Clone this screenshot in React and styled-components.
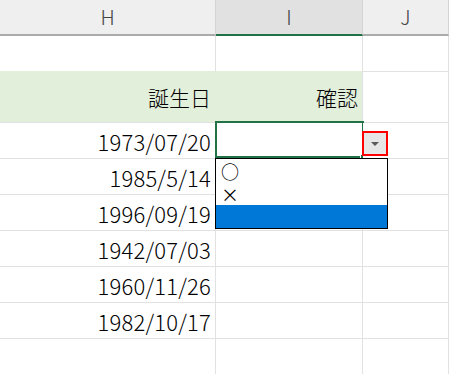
import { Fragment } from "react";
import styled, { createGlobalStyle } from "styled-components";

const GlobalStyle = createGlobalStyle`
  html, body {
    margin: 0;
    padding: 0;
    background: #fff;
    overflow: hidden;
  }
  * {
    box-sizing: border-box;
  }
`;

const Sheet = styled.div`
  display: grid;
  grid-template-columns: 216px 147px 1fr;
  width: 449px;
  font-family: "Noto Sans CJK JP", "Noto Sans", sans-serif;
  color: #000;
`;

const ColHead = styled.div`
  height: 36px;
  display: flex;
  align-items: center;
  justify-content: center;
  padding-bottom: 1px;
  background: ${(p) => (p.$active ? "#e1e1e1" : "#efefef")};
  border-right: 1px solid #d4d4d4;
  border-bottom: 2px solid ${(p) => (p.$active ? "#217346" : "#ababab")};
  font-size: 20px;
  font-weight: 300;
  color: #444;
`;

const Cell = styled.div`
  position: relative;
  height: ${(p) => p.$h || 36}px;
  display: flex;
  align-items: center;
  justify-content: flex-end;
  padding-right: 4px;
  background: ${(p) => p.$fill || "#fff"};
  border-right: 1px solid ${(p) => p.$right || "#e1e1e1"};
  border-bottom: 1px solid ${(p) => p.$bottom || "#e1e1e1"};
  font-size: 21px;
  font-weight: 300;
  line-height: 1;
  white-space: nowrap;
`;

const DateText = styled.span`
  font-size: 22px;
  letter-spacing: 0.2px;
`;

const Selection = styled.div`
  position: absolute;
  left: -1px;
  top: -2px;
  width: 149px;
  height: 37px;
  border: 2px solid #217346;
  pointer-events: none;
`;

const FillHandle = styled.div`
  position: absolute;
  right: -4px;
  bottom: -4px;
  width: 6px;
  height: 6px;
  background: #217346;
  border: 1px solid #fff;
`;

const DropButton = styled.div`
  position: absolute;
  left: 146px;
  top: 8px;
  width: 26px;
  height: 25px;
  border: 2px solid #ff0000;
  background: #e6e6e6;
  display: flex;
  align-items: center;
  justify-content: center;
  z-index: 2;
`;

const Caret = styled.div`
  width: 0;
  height: 0;
  border-left: 4px solid transparent;
  border-right: 4px solid transparent;
  border-top: 4px solid #5a5a5a;
  margin-top: 1px;
`;

const ListBox = styled.div`
  position: absolute;
  left: -1px;
  top: 35px;
  width: 173px;
  height: 71px;
  border: 1px solid #000;
  background: #fff;
  z-index: 3;
`;

const Option = styled.div`
  height: 23px;
  display: flex;
  align-items: center;
  padding-left: 5px;
  font-size: 18px;
  font-weight: 400;
  line-height: 1;
  overflow: hidden;
  background: ${(p) => (p.$selected ? "#0078d7" : "transparent")};
  color: ${(p) => (p.$selected ? "#fff" : "#000")};
`;

const dates = ["1985/5/14", "1996/09/19", "1942/07/03", "1960/11/26", "1982/10/17"];

const green = "#e2efda";

function App() {
  return (
    <>
      <GlobalStyle />
      <Sheet>
        <ColHead>H</ColHead>
        <ColHead $active>I</ColHead>
        <ColHead>J</ColHead>

        <Cell $bottom={green} />
        <Cell $bottom={green} />
        <Cell />

        <Cell $h={51} $fill={green} $right={green}>誕生日</Cell>
        <Cell $h={51} $fill={green}>確認</Cell>
        <Cell $h={51} />

        <Cell><DateText>1973/07/20</DateText></Cell>
        <Cell>
          <Selection>
            <FillHandle />
          </Selection>
          <DropButton>
            <Caret />
          </DropButton>
          <ListBox>
            <Option>○</Option>
            <Option>×</Option>
            <Option $selected />
          </ListBox>
        </Cell>
        <Cell />

        {dates.map((d) => (
          <Fragment key={d}>
            <Cell><DateText>{d}</DateText></Cell>
            <Cell />
            <Cell />
          </Fragment>
        ))}

        <Cell />
        <Cell />
        <Cell />
      </Sheet>
    </>
  );
}

export default App;
